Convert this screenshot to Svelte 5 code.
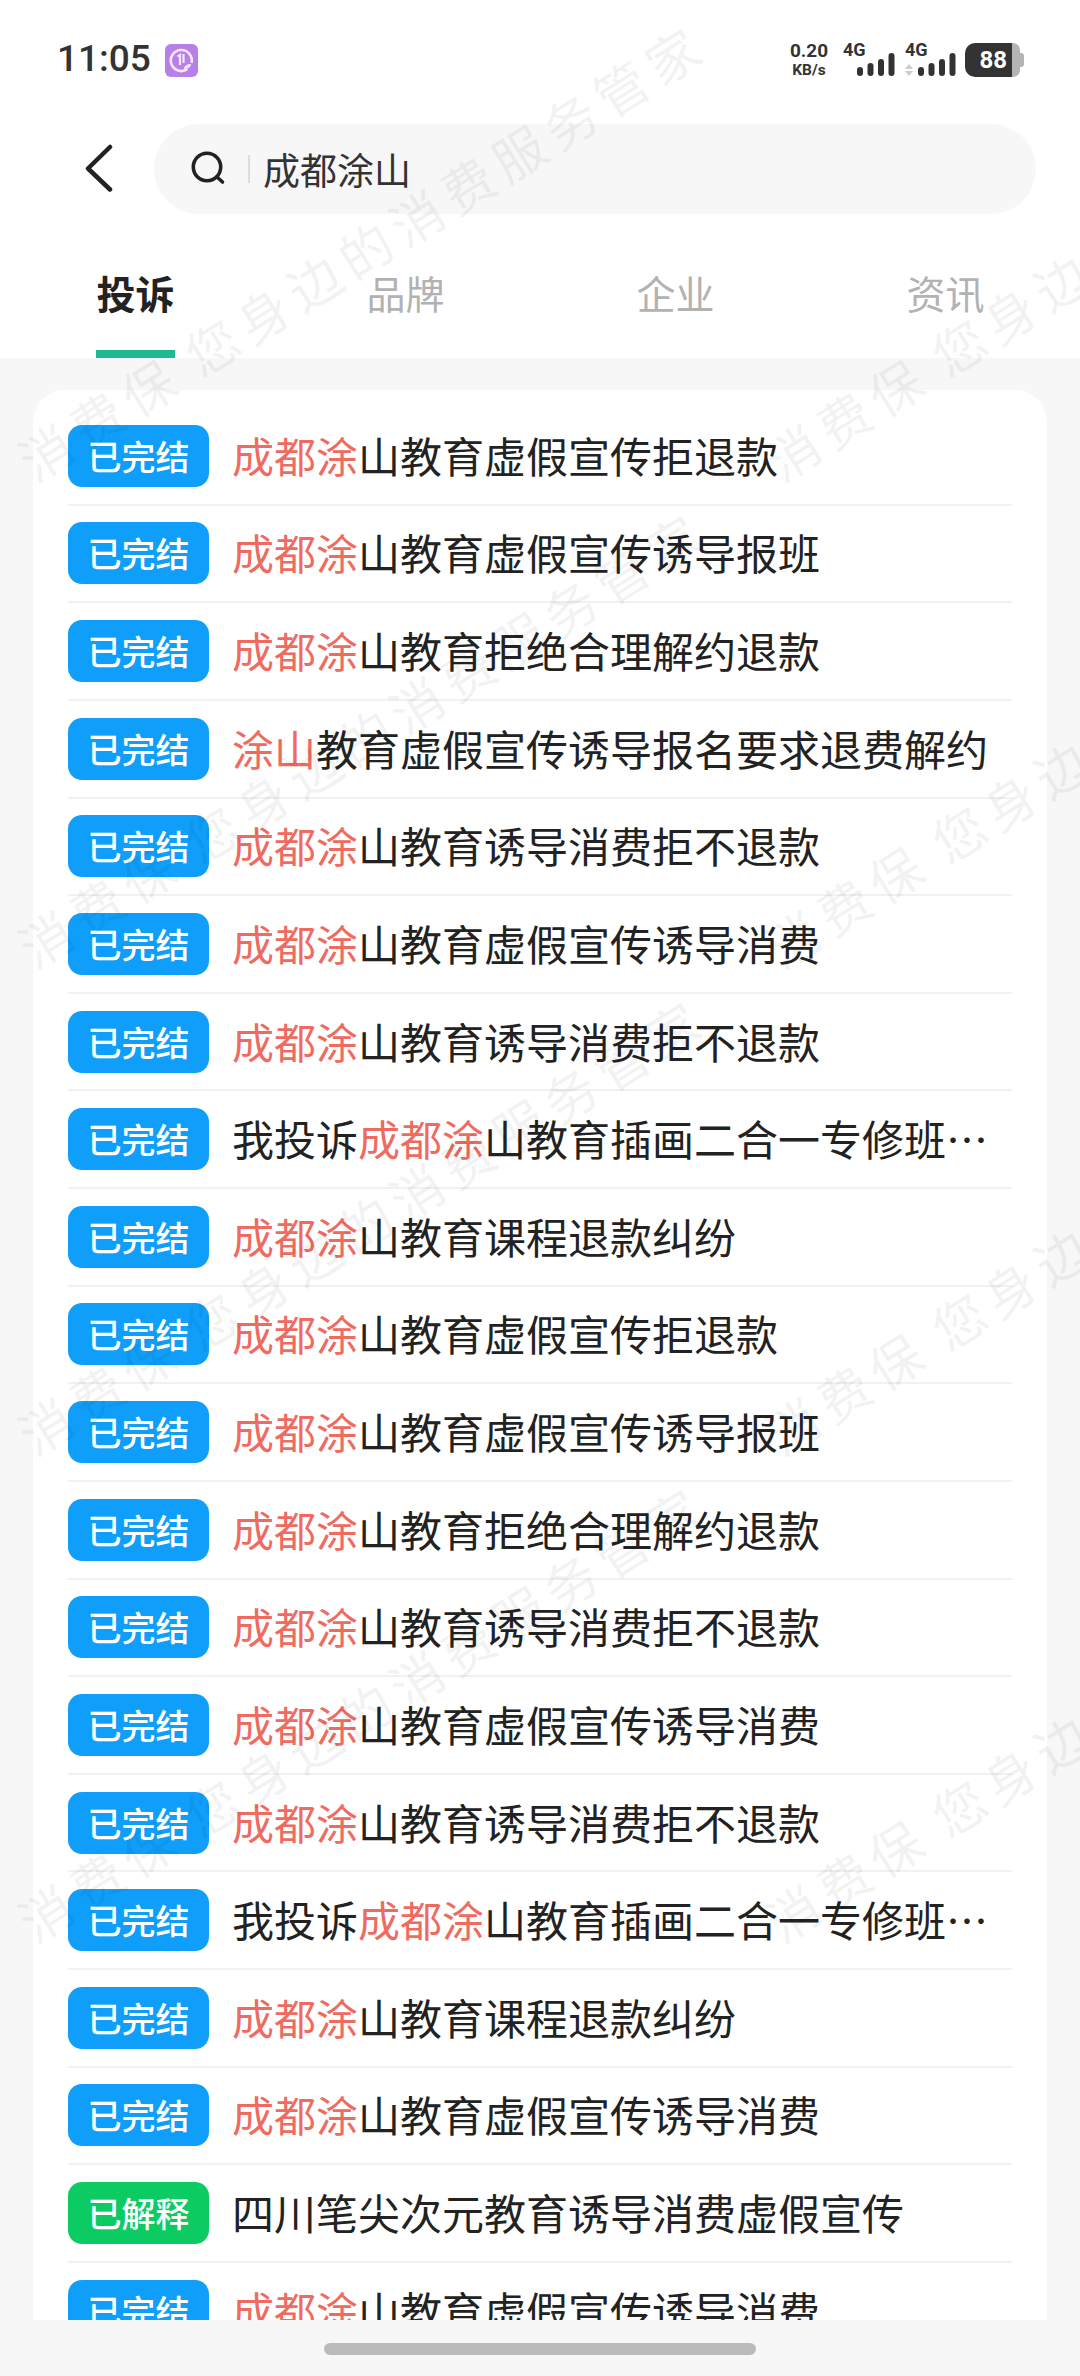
<script>
  const t1 = '山教育虚假宣传拒退款';
  const t2 = '山教育虚假宣传诱导报班';
  const t3 = '山教育拒绝合理解约退款';
  const t5 = '山教育诱导消费拒不退款';
  const t6 = '山教育虚假宣传诱导消费';
  const t9 = '山教育课程退款纠纷';
  const hl = '成都涂';
  const rows = [
    { hl, post: t1 }, { hl, post: t2 }, { hl, post: t3 },
    { hl: '涂山', post: '教育虚假宣传诱导报名要求退费解约' },
    { hl, post: t5 }, { hl, post: t6 }, { hl, post: t5 },
    { pre: '我投诉', hl, post: '山教育插画二合一专修班…' },
    { hl, post: t9 }, { hl, post: t1 }, { hl, post: t2 }, { hl, post: t3 },
    { hl, post: t5 }, { hl, post: t6 }, { hl, post: t5 },
    { pre: '我投诉', hl, post: '山教育插画二合一专修班…' },
    { hl, post: t9 }, { hl, post: t6 },
    { pre: '四川笔尖次元教育诱导消费虚假宣传', status: '已解释', green: true },
    { hl, post: t6 }
  ];
  const tabs = ['投诉', '品牌', '企业', '资讯'];
  const marks = Array.from({ length: 8 }, (_, i) => i);
  const bars = [
    { h: 9, x: 0 }, { h: 13, x: 10.5 }, { h: 17, x: 21 }, { h: 23, x: 31.5 }
  ];
</script>

<div class="phone">
  <header class="status">
    <div class="left">
      <span class="time">11:05</span>
      <svg class="badge-app" viewBox="0 0 33 33" width="33" height="33" aria-hidden="true">
        <rect width="33" height="33" rx="6" fill="#b97fe8" />
        <path d="M22.5 25A10.5 10.5 0 1 1 26.5 19" fill="none" stroke="#f3e6fb" stroke-width="2.6" />
        <path d="M12.5 12.5l2.5-1.5v10M18.5 10v9" fill="none" stroke="#f3e6fb" stroke-width="2.2" />
        <path d="M19 25c0-3.5 3-5 7-5 0 3.500-3 5-7 5z" fill="#f3e6fb" />
      </svg>
    </div>
    <div class="right">
      <div class="speed"><span class="num">0.20</span><span class="unit">KB/s</span></div>
      <div class="sig one">
        <span class="g">4G</span>
        <svg class="bars" viewBox="0 0 38 23" width="38" height="23" aria-hidden="true">
          {#each bars as b}
            <rect x={b.x} y={23 - b.h} width="6" height={b.h} rx="3" fill="#333" />
          {/each}
        </svg>
      </div>
      <div class="sig two">
        <span class="g">4G</span>
        <div class="sigrow">
          <svg viewBox="0 0 8 12" width="8" height="12" aria-hidden="true">
            <path d="M4 0l4 5H0zM4 12L0 7h8z" fill="#ccc" />
          </svg>
          <svg class="bars" viewBox="0 0 38 23" width="38" height="23" aria-hidden="true">
            {#each bars as b}
              <rect x={b.x} y={23 - b.h} width="6" height={b.h} rx="3" fill="#333" />
            {/each}
          </svg>
        </div>
      </div>
      <div class="battery"><span class="level">88</span><span class="rest"></span><span class="nub"></span></div>
    </div>
  </header>

  <div class="searchrow">
    <button class="back" aria-label="返回">
      <svg viewBox="0 0 30 50" width="30" height="50" aria-hidden="true">
        <path d="M27 3L5 24.500l22 21" fill="none" stroke="#222" stroke-width="4.500" stroke-linecap="round" stroke-linejoin="round" />
      </svg>
    </button>
    <div class="search">
      <svg viewBox="0 0 38 38" width="38" height="38" aria-hidden="true">
        <circle cx="18" cy="18" r="13.700" fill="none" stroke="#222" stroke-width="3.600" />
        <path d="M28 28l5.500 5" stroke="#222" stroke-width="3.600" stroke-linecap="round" />
      </svg>
      <span class="caret"></span>
      <span class="query">成都涂山</span>
    </div>
  </div>

  <nav class="tabs">
    {#each tabs as tab, i}
      <div class="tab" class:active={i === 0}>
        <span>{tab}</span>
        <i class="line"></i>
      </div>
    {/each}
  </nav>

  <main class="content">
    <section class="card">
      {#each rows as r}
        <div class="row">
          <span class="status-tag" class:green={r.green}>{r.status ?? '已完结'}</span>
          <span class="title">{r.pre ?? ''}<em>{r.hl ?? ''}</em>{r.post ?? ''}</span>
        </div>
      {/each}
    </section>
    <div class="home"></div>
  </main>

  <div class="watermark" aria-hidden="true">
    {#each marks as m}
      <div class="cell"><span>消费保 您身边的消费服务管家</span></div>
    {/each}
  </div>
</div>

<style>
  :global(body) {
    margin: 0;
    background: #fff;
  }
  .phone {
    position: relative;
    width: 1080px;
    height: 2376px;
    overflow: hidden;
    background: #fff;
    display: flex;
    flex-direction: column;
    font-family: "Noto Sans CJK SC", "Noto Sans", sans-serif;
    color: #222;
  }
  .status {
    height: 124px;
    box-sizing: border-box;
    flex: none;
    display: flex;
    justify-content: space-between;
    align-items: flex-start;
    padding: 43px 56px 0 57px;
  }
  .left {
    display: flex;
    align-items: flex-start;
    gap: 14px;
  }
  .time {
    font: 500 37px/32px Roboto, sans-serif;
    color: #333;
  }
  .badge-app {
    display: block;
    margin-top: 1px;
  }
  .right {
    display: flex;
    align-items: flex-start;
    color: #333;
    font-family: Roboto, sans-serif;
  }
  .speed {
    width: 40px;
    margin-top: -2px;
    display: flex;
    flex-direction: column;
    align-items: center;
    font-weight: 700;
    white-space: nowrap;
  }
  .num {
    font-size: 19px;
    line-height: 19px;
  }
  .unit {
    font-size: 15.5px;
    line-height: 16px;
    margin-top: 2px;
  }
  .sig {
    height: 34px;
  }
  .g {
    display: block;
    font-size: 18px;
    font-weight: 700;
    line-height: 13px;
  }
  .one {
    width: 52px;
    margin-left: 14px;
  }
  .one .bars {
    margin: -3px 0 0 14px;
  }
  .two {
    margin-left: 10px;
    width: 51px;
  }
  .sigrow {
    display: flex;
    align-items: flex-end;
    gap: 5px;
    margin-top: -3px;
  }
  .bars {
    display: block;
    flex: none;
  }
  .battery {
    display: flex;
    align-items: center;
    height: 34px;
    margin-left: 9px;
  }
  .level {
    box-sizing: border-box;
    width: 47px;
    height: 34px;
    background: #333;
    color: #fff;
    border-radius: 10px 0 0 10px;
    font-size: 24px;
    font-weight: 700;
    line-height: 34px;
    text-align: right;
    padding-right: 5px;
  }
  .rest {
    width: 8px;
    height: 34px;
    background: #b4b4b4;
    border-radius: 0 7px 7px 0;
  }
  .nub {
    width: 4px;
    height: 14px;
    background: #b4b4b4;
    border-radius: 0 3px 3px 0;
  }
  .searchrow {
    flex: none;
    height: 90px;
    display: flex;
    align-items: center;
    padding: 0 44px 0 83px;
  }
  .back {
    border: 0;
    background: none;
    padding: 0;
    width: 71px;
    height: 50px;
    flex: none;
    display: block;
    text-align: left;
  }
  .back svg {
    display: block;
  }
  .search {
    flex: 1;
    height: 90px;
    border-radius: 45px;
    background: #f7f7f7;
    display: flex;
    align-items: center;
    padding-left: 35px;
  }
  .search svg {
    flex: none;
    margin-top: -2px;
  }
  .caret {
    width: 2px;
    height: 28px;
    margin-left: 21px;
    background: #ddd;
  }
  .query {
    margin-left: 13px;
    font-size: 37px;
    line-height: 50px;
    color: #333;
  }
  .tabs {
    flex: none;
    height: 144px;
    display: flex;
    justify-content: space-between;
    padding: 0 95px 0 96px;
  }
  .tab {
    width: 79px;
    display: flex;
    flex-direction: column;
    align-items: center;
    color: #b2b2b2;
    font-size: 39px;
    line-height: 54px;
    padding-top: 51px;
    box-sizing: border-box;
    white-space: nowrap;
  }
  .tab.active {
    color: #222;
    font-weight: 700;
  }
  .line {
    width: 79px;
    height: 8px;
    margin-top: auto;
  }
  .active .line {
    background: #1fb992;
  }
  .content {
    flex: 1;
    background: #f7f7f7;
    padding-top: 32px;
    display: flex;
    flex-direction: column;
    min-height: 0;
  }
  .card {
    flex: none;
    height: 1930px;
    box-sizing: border-box;
    margin: 0 33px;
    padding: 18px 35px 0;
    background: #fff;
    border-radius: 32px 32px 0 0;
    overflow: hidden;
  }
  .row {
    height: 97.63px;
    box-sizing: border-box;
    border-bottom: 2px solid #f1f1f1;
    display: flex;
    align-items: center;
    gap: 23px;
  }
  .status-tag {
    flex: none;
    width: 141px;
    height: 62px;
    border-radius: 14px;
    background: #0f9ffa;
    color: #fff;
    font-size: 34px;
    font-weight: 500;
    line-height: 62px;
    text-align: center;
  }
  .status-tag.green {
    background: #0dcb63;
  }
  .title {
    font-size: 42px;
    line-height: 58px;
    padding-bottom: 2px;
    white-space: nowrap;
    color: #222;
  }
  em {
    font-style: normal;
    color: #ef6a5f;
  }
  .home {
    flex: none;
    width: 432px;
    height: 12px;
    margin: 23px auto 0;
    border-radius: 6px;
    background: #bbb;
  }
  .watermark {
    position: absolute;
    inset: 0;
    padding: 435px 0 0 23px;
    display: grid;
    grid-template-columns: repeat(2, 747px);
    grid-auto-rows: 487px;
    pointer-events: none;
  }
  .cell span {
    display: block;
    width: 800px;
    font-size: 52px;
    letter-spacing: 8.5px;
    word-spacing: -5px;
    line-height: 60px;
    white-space: nowrap;
    color: rgba(0, 0, 0, 0.05);
    transform-origin: left center;
    transform: rotate(-32.3deg);
  }
</style>
